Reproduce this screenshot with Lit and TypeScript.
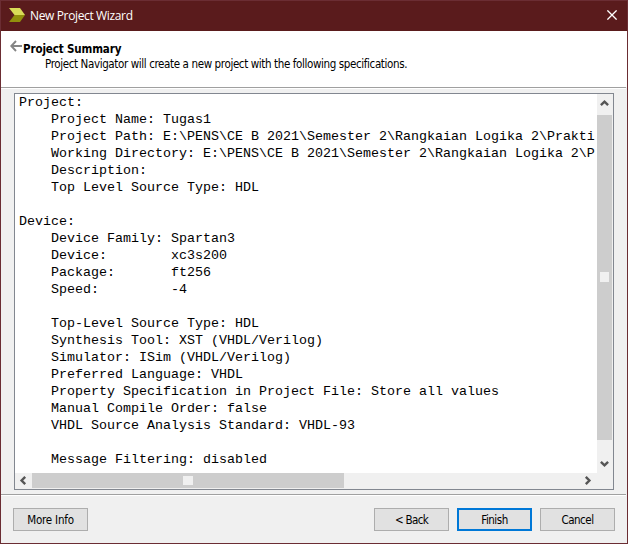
import { LitElement, html, css, svg } from "lit";
import { customElement, property } from "lit/decorators.js";

const SUMMARY = String.raw`Project:
    Project Name: Tugas1
    Project Path: E:\PENS\CE B 2021\Semester 2\Rangkaian Logika 2\Prakti
    Working Directory: E:\PENS\CE B 2021\Semester 2\Rangkaian Logika 2\P
    Description:
    Top Level Source Type: HDL

Device:
    Device Family: Spartan3
    Device:        xc3s200
    Package:       ft256
    Speed:         -4

    Top-Level Source Type: HDL
    Synthesis Tool: XST (VHDL/Verilog)
    Simulator: ISim (VHDL/Verilog)
    Preferred Language: VHDL
    Property Specification in Project File: Store all values
    Manual Compile Order: false
    VHDL Source Analysis Standard: VHDL-93

    Message Filtering: disabled`;

const CHEVRONS: Record<string, string> = {
  up: "M0.9 6.2 L4.5 2.6 L8.1 6.2",
  down: "M0.9 2.8 L4.5 6.4 L8.1 2.8",
  left: "M6.2 0.9 L2.6 4.5 L6.2 8.1",
  right: "M2.8 0.9 L6.4 4.5 L2.8 8.1",
};

@customElement("scroll-arrow")
class ScrollArrow extends LitElement {
  @property() dir = "up";
  static styles = css`
    :host { display: flex; align-items: center; justify-content: center; }
    svg { display: block; width: 9px; height: 9px; }
  `;
  render() {
    return html`<svg viewBox="0 0 9 9">
      ${svg`<path d=${CHEVRONS[this.dir]} fill="none" stroke="#555" stroke-width="2.4"/>`}
    </svg>`;
  }
}

@customElement("wizard-button")
class WizardButton extends LitElement {
  static styles = css`
    :host { display: block; width: 75px; height: 23px; }
    button {
      display: flex; align-items: center; justify-content: center;
      box-sizing: border-box; width: 100%; height: 100%;
      margin: 0; padding: 2px 0 0; border: 1px solid #adadad; border-radius: 0;
      background: #e1e1e1; color: #000;
      font: 11.5px/19px "DejaVu Sans Condensed", "DejaVu Sans", sans-serif;
      letter-spacing: var(--track, -0.5px); white-space: nowrap;
    }
    :host([primary]) button { border: 2px solid #0078d7; padding: 2px 0 0; line-height: 17px; }
  `;
  render() {
    return html`<button><slot></slot></button>`;
  }
}

@customElement("app-root")
class AppRoot extends LitElement {
  static styles = css`
    :host {
      display: flex; flex-direction: column; box-sizing: border-box;
      width: 628px; height: 544px; overflow: hidden;
      border: 1px solid #6b2d33; background: #f0f0f0; color: #000;
      font: 11.5px/14px "DejaVu Sans Condensed", "DejaVu Sans", sans-serif;
    }
    .title {
      height: 30px; flex: none; display: flex; align-items: center;
      box-sizing: border-box; padding: 0 10px 0 8px; background: #5a1b1c; color: #fff;
      font: 12px/16px "Open Sans", "Noto Sans", sans-serif;
    }
    .logo { width: 16px; height: 14px; margin: 0 5px 2px 0; }
    .title span { flex: 1; letter-spacing: -0.36px; }
    .close { width: 10px; height: 10px; margin-bottom: 2px; }
    .head {
      height: 56px; flex: none; background: #fff; box-sizing: border-box; padding: 9px 0 0 9px;
      display: flex;
    }
    .arrow { width: 12px; height: 12px; margin-right: 1px; flex: none; }
    .heading { font-weight: bold; letter-spacing: -0.13px; padding-top: 2px; }
    .sub { padding: 1px 0 0 22px; letter-spacing: -0.38px; white-space: nowrap; }
    .rule { height: 1px; flex: none; background: #a0a0a0; border-bottom: 1px solid #fff; margin-right: 1px; }
    .box {
      display: grid; grid-template: 379px 16px / 582px 16px; margin: 4px 0 4px 13px;
      width: 598px; height: 395px; border: 1px solid #828790; background: #fff; flex: none;
    }
    pre {
      margin: 0; padding: 0 0 0 4px; overflow: hidden; box-sizing: border-box; height: 379px;
      font: 13.333px/17px "Liberation Mono", "Courier New", monospace;
    }
    .v, .h { display: flex; background: #f0f0f0; }
    .v { flex-direction: column; align-items: flex-start; }
    .v scroll-arrow { width: 15px; height: 17px; margin-top: 1px; }
    .v .thumb { width: 15px; height: 325px; margin-top: 3px; }
    .v .last { margin-top: 14px; height: 18px; }
    .h .thumb { width: 312px; height: 15px; }
    .h scroll-arrow { width: 17px; height: 15px; }
    .h .last { margin-left: auto; margin-right: 1px; }
    .thumb { background: #cdcdcd; display: flex; align-items: center; justify-content: center; }
    .grip { width: 10px; height: 9px; background: #f0f0f0; }
    .v .grip { width: 9px; height: 10px; margin-bottom: 1px; }
    .corner { background: #f0f0f0; }
    .foot { display: flex; gap: 8px; padding: 12px 12px 0; }
    .foot wizard-button:first-child { margin-right: auto; --track: -0.2px; }
    .foot .back { --track: -0.65px; }
  `;
  render() {
    return html`
      <div class="title">
        <svg class="logo" viewBox="0 0 16 14">
          <path d="M0 0H11L16 7H5.5Z" fill="#d9dc57" />
          <path d="M5.5 7H16L11 14H0Z" fill="#918f0c" />
        </svg>
        <span>New Project Wizard</span>
        <svg class="close" viewBox="0 0 10 10">
          <path d="M.4 .4L9.6 9.6M9.6 .4L.4 9.6" stroke="#fff" stroke-width="1.3" />
        </svg>
      </div>
      <div class="head">
        <svg class="arrow" viewBox="0 0 12 12">
          <path d="M6 1L1.3 6L6 11M1.5 6H12" fill="none" stroke="#858585" stroke-width="1.9" />
        </svg>
        <div>
          <div class="heading">Project Summary</div>
          <div class="sub">Project Navigator will create a new project with the following specifications.</div>
        </div>
      </div>
      <div class="rule"></div>
      <div class="box">
        <pre>${SUMMARY}</pre>
        <div class="v">
          <scroll-arrow dir="up"></scroll-arrow>
          <div class="thumb"><div class="grip"></div></div>
          <scroll-arrow class="last" dir="down"></scroll-arrow>
        </div>
        <div class="h">
          <scroll-arrow dir="left"></scroll-arrow>
          <div class="thumb"><div class="grip"></div></div>
          <scroll-arrow class="last" dir="right"></scroll-arrow>
        </div>
        <div class="corner"></div>
      </div>
      <div class="rule"></div>
      <div class="foot">
        <wizard-button>More Info</wizard-button>
        <wizard-button class="back">&lt; Back</wizard-button>
        <wizard-button primary>Finish</wizard-button>
        <wizard-button>Cancel</wizard-button>
      </div>
    `;
  }
}
